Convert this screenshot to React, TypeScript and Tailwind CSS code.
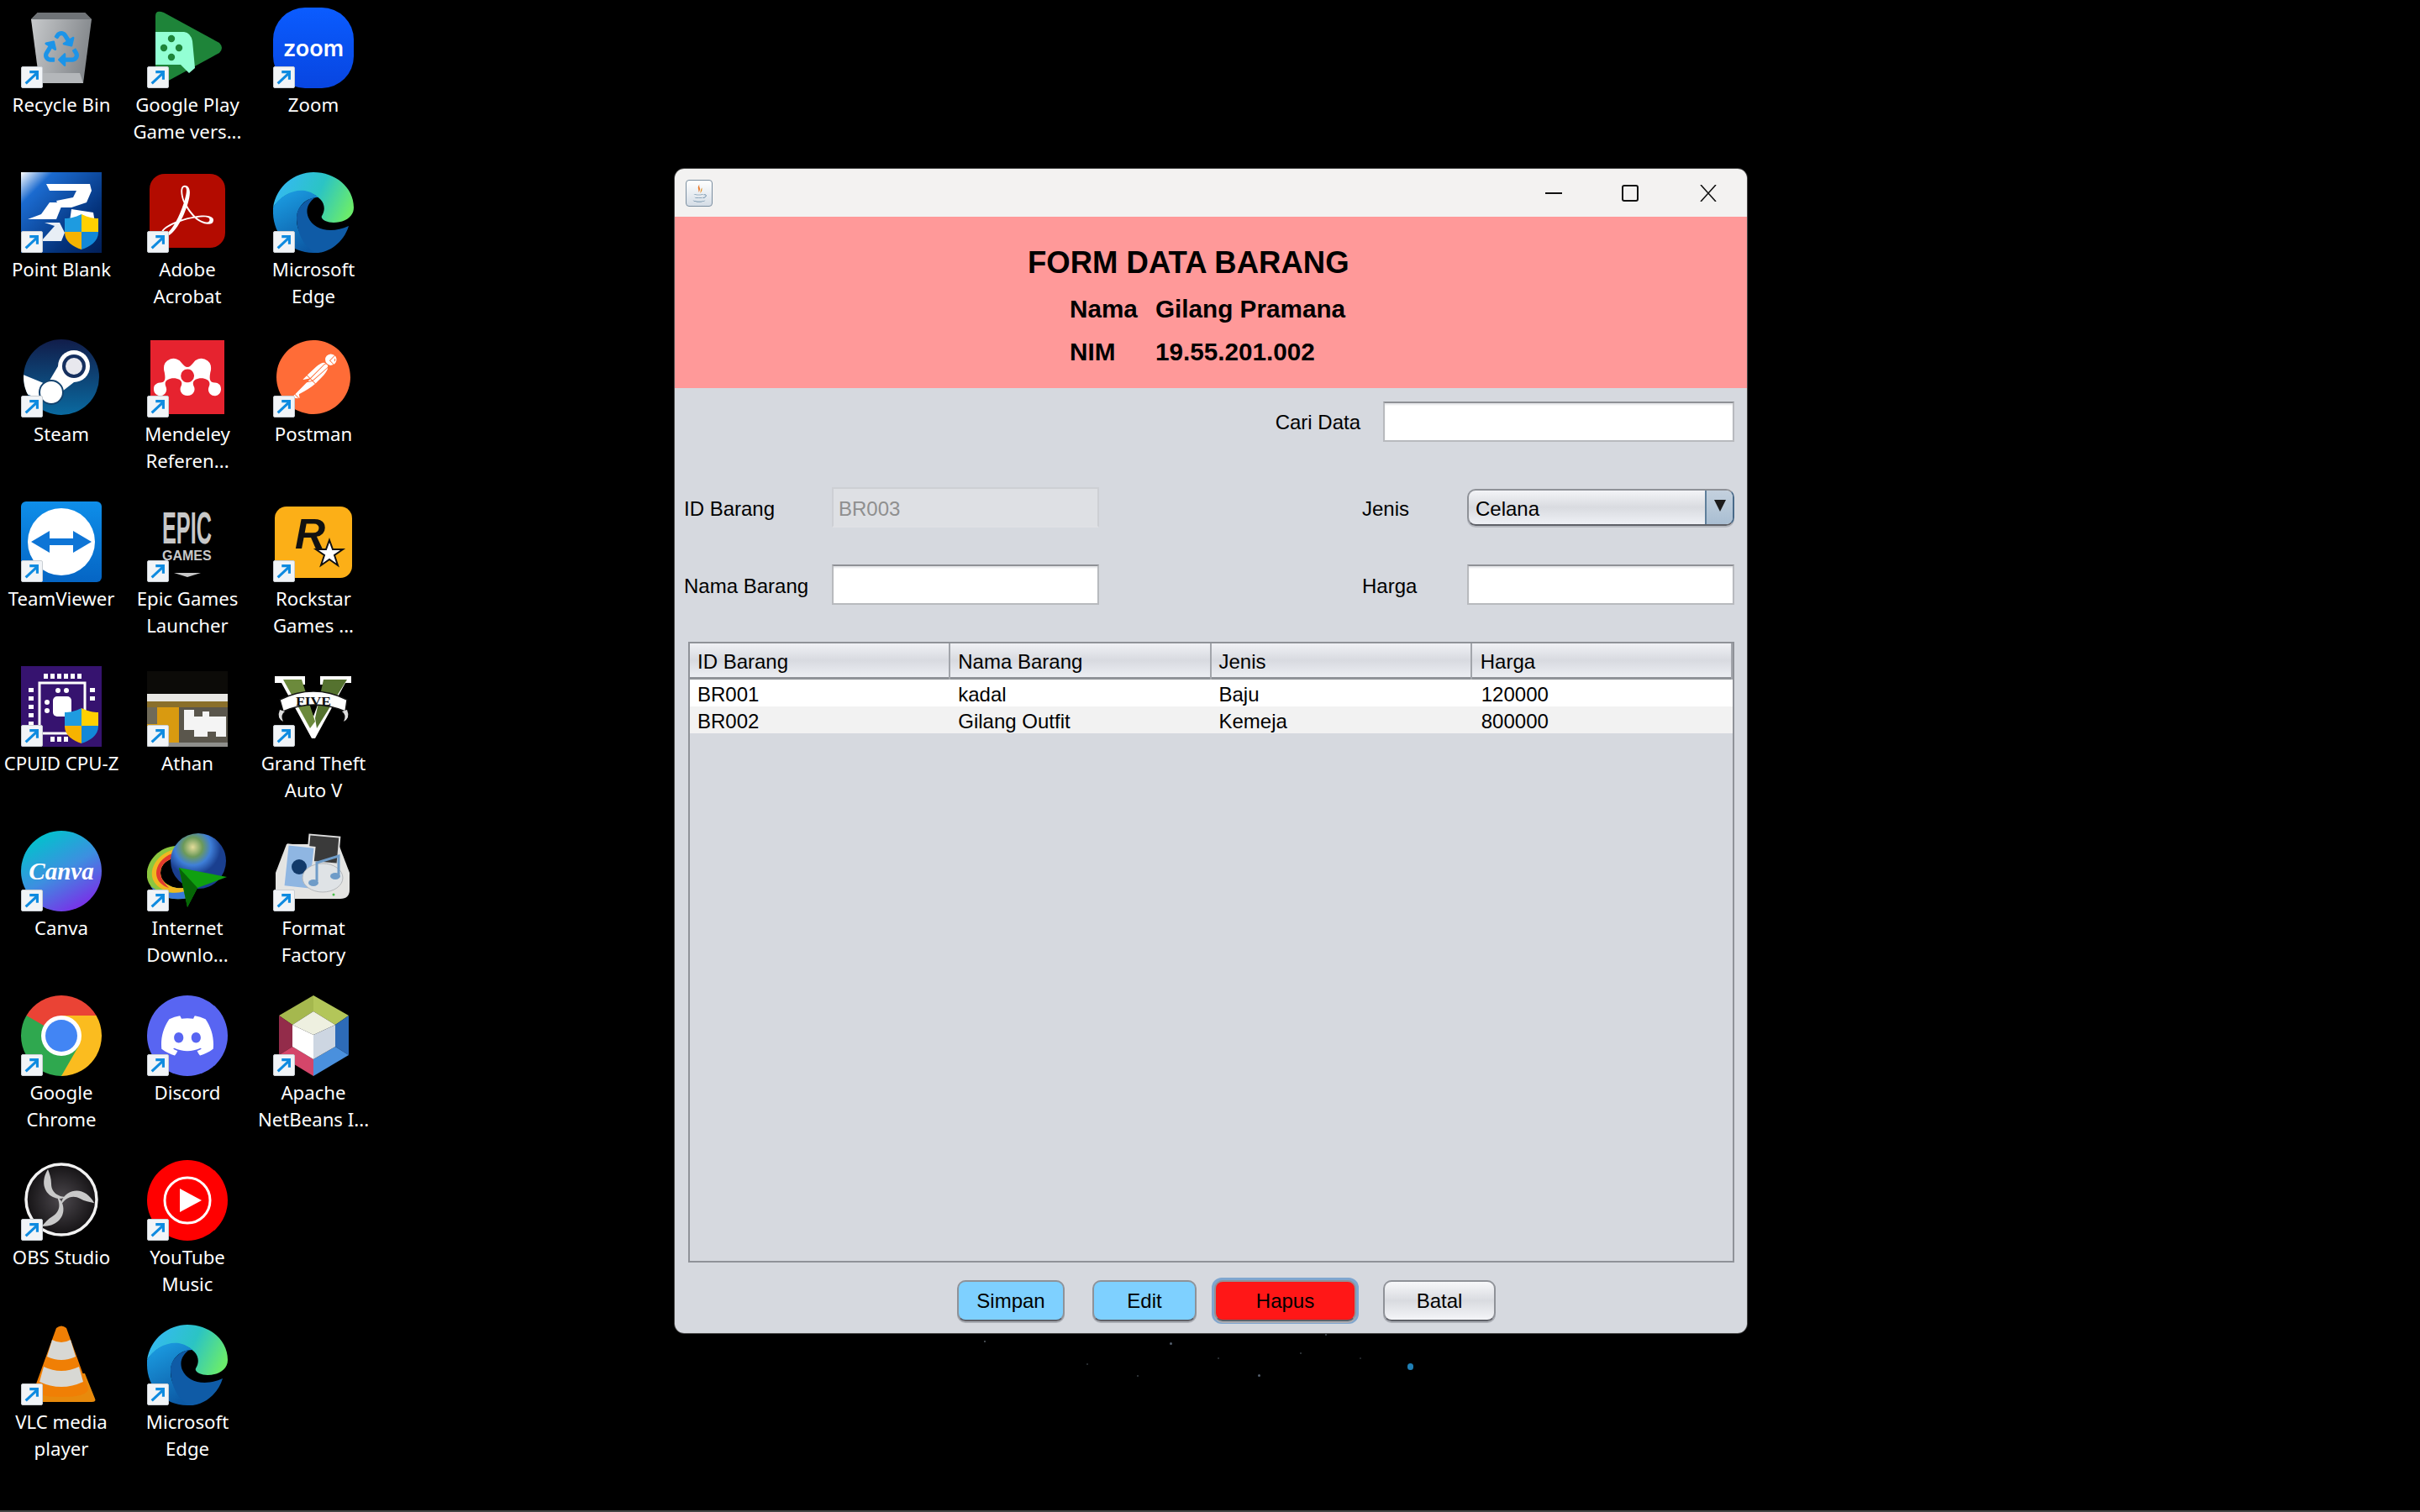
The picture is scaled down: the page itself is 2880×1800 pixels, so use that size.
import type { ReactNode } from "react";
import { FaRecycle } from "react-icons/fa";
import { SiAdobeacrobatreader, SiDiscord, SiMendeley, SiPostman } from "react-icons/si";

function Uac({ id }: { id: string }) {
  const shield = "M72 50C80 54 86 55 92 55V72C92 82 82 89 72 92C62 89 52 82 52 72V55C58 55 64 54 72 50Z";
  return (
    <>
      <clipPath id={id}>
        <path d={shield} />
      </clipPath>
      <g clipPath={`url(#${id})`}>
        <rect x="52" y="50" width="20" height="21" fill="#1e9be0" />
        <rect x="72" y="50" width="20" height="21" fill="#ffd000" />
        <rect x="52" y="71" width="20" height="21" fill="#f6b300" />
        <rect x="72" y="71" width="20" height="21" fill="#1288d8" />
      </g>
    </>
  );
}

function Svg({ children }: { children: ReactNode }) {
  return (
    <svg viewBox="0 0 96 96" className="w-24 h-24 block">
      {children}
    </svg>
  );
}

function Edge() {
  return (
    <Svg>
      <defs>
        <linearGradient id="edgeTop" x1="0" y1="0.3" x2="1" y2="0.6">
          <stop offset="0" stopColor="#35b8f5" />
          <stop offset="0.55" stopColor="#2bc4c4" />
          <stop offset="1" stopColor="#6aeb6c" />
        </linearGradient>
        <linearGradient id="edgeLeft" x1="0.2" y1="0" x2="0.6" y2="1">
          <stop offset="0" stopColor="#1b9de2" />
          <stop offset="1" stopColor="#0c59a4" />
        </linearGradient>
      </defs>
      <path d="M0 42C4 16 26 0 48 0C74 0 96 18 96 42C96 54 84 60 72 60C64 60 56 56 58 52C62 46 62 38 56 32C46 22 30 22 18 26C10 30 4 36 0 42Z" fill="url(#edgeTop)" />
      <path d="M0 42C8 28 24 20 38 22C48 24 54 30 54 30C38 30 28 42 28 56C28 72 40 88 56 96H48C20 96 0 74 0 48Z" fill="url(#edgeLeft)" />
      <path d="M28 54C28 42 38 32 50 30C42 36 38 44 42 54C48 68 68 74 90 64C84 84 66 96 52 96C38 92 28 72 28 54Z" fill="#0f5ba6" />
    </Svg>
  );
}

function Chrome() {
  const sector = "M48 48L89.57 24A48 48 0 0 0 6.43 24L27.2 60Z";
  return (
    <Svg>
      <path d={sector} fill="#ea4335" />
      <path d={sector} fill="#fbbc1f" transform="rotate(120 48 48)" />
      <path d={sector} fill="#2fa84f" transform="rotate(240 48 48)" />
      <circle cx="48" cy="48" r="24" fill="#fff" />
      <circle cx="48" cy="48" r="19" fill="#4285f4" />
    </Svg>
  );
}

function Obs() {
  const blade = "M32 11C24 24 26 38 38 44C44 47 50 46 54 44C46 44 36 40 36 28C36 22 34 16 32 11Z";
  return (
    <Svg>
      <defs>
        <radialGradient id="obsDisc">
          <stop offset="0" stopColor="#4c484d" />
          <stop offset="1" stopColor="#151315" />
        </radialGradient>
      </defs>
      <ellipse cx="48" cy="47" rx="42" ry="42" fill="url(#obsDisc)" stroke="#f2f2f2" strokeWidth="3.5" />
      <g fill="#c9c9c9">
        <path d={blade} />
        <path d={blade} transform="rotate(120 48 47)" />
        <path d={blade} transform="rotate(240 48 47)" />
      </g>
    </Svg>
  );
}

const ICONS: Record<string, ReactNode> = {
  recycle: (
    <div className="relative w-24 h-24">
      <Svg>
        <defs>
          <linearGradient id="bin" x1="0" y1="0" x2="1" y2="0.3">
            <stop offset="0" stopColor="#c9cbcd" />
            <stop offset="1" stopColor="#85898d" />
          </linearGradient>
        </defs>
        <path d="M12 14L20 6H76L84 14L74 90H22Z" fill="url(#bin)" />
        <path d="M12 14L20 6H76L84 14Z" fill="#6f7377" />
        <path d="M22 90L26 78H70L74 90Z" fill="#b4b7ba" />
      </Svg>
      <FaRecycle className="absolute left-[27px] top-[28px] w-[42px] h-[42px] text-[#1c94e8]" />
    </div>
  ),
  play: (
    <Svg>
      <path d="M10 10Q10 2 20 6L86 42Q92 48 86 54L20 90L10 84Z" fill="#1e8439" />
      <path d="M10 29H44Q52 30 54 40L57 72L50 78L40 68H10Z" fill="#93ffd4" />
      <g fill="#1e8439">
        <circle cx="20" cy="48" r="4.2" />
        <circle cx="38" cy="48" r="4.2" />
        <circle cx="29" cy="37" r="4.2" />
        <circle cx="29" cy="59" r="4.2" />
      </g>
    </Svg>
  ),
  zoom: (
    <div className="w-24 h-24 rounded-[38px] bg-gradient-to-b from-[#0b5cff] to-[#0845e0] flex items-center justify-center">
      <span className="font-['Inter',sans-serif] font-semibold text-[27px] text-white leading-none">zoom</span>
    </div>
  ),
  pointblank: (
    <Svg>
      <defs>
        <linearGradient id="pbBg" x1="0" y1="0" x2="1" y2="1">
          <stop offset="0" stopColor="#ffffff" />
          <stop offset="0.2" stopColor="#1b6bd0" />
          <stop offset="0.7" stopColor="#04337c" />
          <stop offset="1" stopColor="#021f58" />
        </linearGradient>
      </defs>
      <rect width="96" height="96" fill="url(#pbBg)" />
      <path d="M30 14H82L84 22L78 36L60 42H46L42 34L62 30L66 22H34Z" fill="#fff" />
      <path d="M34 36H50L42 56H8L24 50Z" fill="#fff" />
      <path d="M28 60H46L52 72L48 82H24L40 64Z" fill="#e8eef5" />
      <path d="M60 44L86 48L88 60L58 58Z" fill="#fff" />
      <Uac id="uacPb" />
    </Svg>
  ),
  adobe: (
    <div className="w-[90px] h-[88px] mt-[2px] ml-[3px] rounded-[18px] bg-[#b30b00] flex items-center justify-center">
      <SiAdobeacrobatreader className="w-[62px] h-[62px] text-white" />
    </div>
  ),
  edge: <Edge />,
  steam: (
    <Svg>
      <defs>
        <linearGradient id="steamBg" x1="0" y1="0" x2="0" y2="1">
          <stop offset="0" stopColor="#111d4a" />
          <stop offset="1" stopColor="#0a6aa0" />
        </linearGradient>
        <clipPath id="steamClip">
          <circle cx="48" cy="48" r="45" />
        </clipPath>
      </defs>
      <circle cx="48" cy="48" r="45" fill="url(#steamBg)" />
      <g clipPath="url(#steamClip)">
        <path d="M50 25L72 47L40 72L28 62Z" fill="#fff" />
        <path d="M0 44L34 58L24 74L6 68Z" fill="#fff" />
        <circle cx="36" cy="66" r="14" fill="#fff" stroke="#13436f" strokeWidth="2" />
      </g>
      <circle cx="63" cy="35" r="19" fill="#fff" />
      <circle cx="63" cy="35" r="14" fill="#16305f" />
      <circle cx="63" cy="35" r="10" fill="#e8e8ee" />
    </Svg>
  ),
  mendeley: (
    <div className="w-[88px] h-[88px] ml-[4px] mt-[4px] bg-[#e6232f] flex items-center justify-center">
      <SiMendeley className="w-[80px] h-[80px] text-white" />
    </div>
  ),
  postman: (
    <div className="relative w-[90px] h-[88px] ml-[3px] mt-[4px]">
      <div className="absolute inset-[2px] rounded-full bg-white" />
      <SiPostman className="absolute inset-0 w-[90px] h-[88px] text-[#ff6c37]" />
    </div>
  ),
  teamviewer: (
    <Svg>
      <defs>
        <linearGradient id="tvBg" x1="0" y1="0" x2="0" y2="1">
          <stop offset="0" stopColor="#0e8ee9" />
          <stop offset="1" stopColor="#0565c4" />
        </linearGradient>
      </defs>
      <rect width="96" height="96" rx="6" fill="url(#tvBg)" />
      <circle cx="48" cy="48" r="40" fill="#fff" />
      <path d="M12 48L34 35V44H62V35L84 48L62 61V52H34V61Z" fill="#0e75d6" />
    </Svg>
  ),
  epic: (
    <Svg>
      <text transform="translate(18 50) scale(0.477 1)" fontFamily="Liberation Sans, sans-serif" fontWeight="700" fontSize="53" fill="#c8c8c8">
        EPIC
      </text>
      <text x="18" y="70" fontFamily="Liberation Sans, sans-serif" fontWeight="700" fontSize="16" fill="#c8c8c8">
        GAMES
      </text>
      <path d="M32 85H64L48 90Z" fill="#c8c8c8" />
    </Svg>
  ),
  rockstar: (
    <Svg>
      <rect x="2" y="6" width="92" height="85" rx="14" fill="#fcaf17" />
      <text x="26" y="56" fontFamily="Liberation Sans, sans-serif" fontWeight="700" fontStyle="italic" fontSize="50" fill="#111">
        R
      </text>
      <path d="M67 46L71 57H83L73 64L77 76L67 69L57 76L61 64L51 57H63Z" fill="#fff" stroke="#111" strokeWidth="2" />
    </Svg>
  ),
  cpuz: (
    <Svg>
      <rect width="96" height="96" fill="#36136f" />
      <rect x="22" y="20" width="54" height="60" fill="none" stroke="#fff" strokeWidth="3" />
      <rect x="38" y="36" width="22" height="24" rx="5" fill="#fff" />
      <g fill="#fff">
        <rect x="27" y="9" width="5" height="6" />
        <rect x="35" y="9" width="5" height="6" />
        <rect x="43" y="9" width="5" height="6" />
        <rect x="51" y="9" width="5" height="6" />
        <rect x="59" y="9" width="5" height="6" />
        <rect x="67" y="9" width="5" height="6" />
        <rect x="9" y="26" width="6" height="5" />
        <rect x="9" y="36" width="6" height="5" />
        <rect x="9" y="46" width="6" height="5" />
        <rect x="9" y="56" width="6" height="5" />
        <rect x="9" y="66" width="6" height="5" />
        <rect x="82" y="26" width="6" height="5" />
        <rect x="82" y="36" width="6" height="5" />
        <rect x="35" y="84" width="5" height="6" />
        <rect x="43" y="84" width="5" height="6" />
        <rect x="51" y="84" width="5" height="6" />
        <circle cx="44" cy="29" r="3" />
        <circle cx="54" cy="29" r="3" />
        <circle cx="31" cy="43" r="3" />
        <circle cx="31" cy="53" r="3" />
      </g>
      <Uac id="uacCpu" />
    </Svg>
  ),
  athan: (
    <Svg>
      <rect y="6" width="96" height="90" fill="#0c0b08" />
      <rect y="33" width="96" height="9" fill="#e8e8e4" />
      <rect y="42" width="96" height="7" fill="#8a6f2a" />
      <rect y="49" width="38" height="42" fill="#d99a10" />
      <rect y="49" width="12" height="20" fill="#6f6a58" />
      <rect x="38" y="49" width="58" height="42" fill="#5a564c" />
      <path d="M44 52H56V60H66V54H74V60H94V84H82V78H72V84H56V76H44Z" fill="#f4f4f4" />
      <rect y="91" width="96" height="5" fill="#8f8f8c" />
    </Svg>
  ),
  gta: (
    <Svg>
      <path d="M2 12H38V22H32L48 60L62 22H56V12H93V20H86L50 86H46L10 20H2Z" fill="#fff" />
      <path d="M12 16H34L50 66L44 74Z" fill="#6c8a3c" />
      <path d="M60 16H88L52 74L50 62Z" fill="#55722f" />
      <path d="M8 40Q48 20 88 40L86 54Q48 38 12 54Z" fill="#fff" stroke="#111" strokeWidth="1.5" />
      <text x="27" y="47" textLength="42" lengthAdjust="spacingAndGlyphs" fontFamily="Liberation Serif, serif" fontWeight="700" fontSize="15" fill="#111">
        FIVE
      </text>
      <path d="M8 52Q4 62 12 66Q8 58 14 54ZM88 52Q92 62 84 66Q88 58 82 54Z" fill="#ddd" />
    </Svg>
  ),
  canva: (
    <div className="w-24 h-24 rounded-full bg-[linear-gradient(150deg,#00c4cc_10%,#3d8fe0_50%,#7d2ae8_90%)] flex items-center justify-center">
      <span className="font-['Liberation_Serif',serif] italic font-bold text-[29px] text-white leading-none">Canva</span>
    </div>
  ),
  idm: (
    <Svg>
      <defs>
        <radialGradient id="globe" cx="0.4" cy="0.25">
          <stop offset="0" stopColor="#e4dc9a" />
          <stop offset="0.35" stopColor="#6c9a5a" />
          <stop offset="0.65" stopColor="#3f7fd8" />
          <stop offset="1" stopColor="#1a3f8f" />
        </radialGradient>
      </defs>
      <path d="M34 18C8 20 -6 46 2 62C10 78 30 84 48 80L44 68C30 70 16 62 16 50C16 40 24 34 34 32Z" fill="#8cc63f" />
      <path d="M34 22C12 26 2 46 7 58C12 70 28 76 46 74L44 68C30 70 16 62 16 50C16 40 24 34 34 32Z" fill="#f0b820" />
      <path d="M34 26C16 30 8 46 12 56C14 62 20 66 26 68C20 62 16 56 16 50C16 40 24 34 34 32Z" fill="#e23b2e" />
      <path d="M4 66C12 78 30 84 48 80L46 72C30 76 14 74 4 66Z" fill="#3a7bd8" />
      <circle cx="61" cy="36" r="33" fill="url(#globe)" />
      <path d="M38 44L95 55L60 68L48 91Z" fill="#10a010" />
      <path d="M38 44L60 68L48 91Z" fill="#066606" />
    </Svg>
  ),
  format: (
    <Svg>
      <path d="M16 16H78L91 50V70Q91 81 80 81H14Q3 81 3 70V50Z" fill="#e4e4e2" />
      <rect x="42" y="6" width="36" height="32" fill="#3a3a3a" stroke="#ddd" strokeWidth="2" transform="rotate(5 60 22)" />
      <rect x="15" y="18" width="32" height="50" fill="#8fb6e2" stroke="#e5e5e5" strokeWidth="2" transform="rotate(6 31 43)" />
      <circle cx="31" cy="43" r="9" fill="#123a6a" />
      <ellipse cx="59" cy="56" rx="24" ry="17" fill="#dfe3e6" stroke="#b5b8bb" />
      <path d="M52 60V38L78 30V52" fill="none" stroke="#6f9cc8" strokeWidth="3" />
      <ellipse cx="48" cy="62" rx="6" ry="4" fill="#6f9cc8" />
      <ellipse cx="74" cy="54" rx="6" ry="4" fill="#6f9cc8" />
      <circle cx="72" cy="76" r="1.5" fill="#4bc04b" />
    </Svg>
  ),
  chrome: <Chrome />,
  discord: (
    <div className="w-24 h-24 rounded-full bg-[#5865f2] flex items-center justify-center">
      <SiDiscord className="w-[62px] h-[62px] text-white" />
    </div>
  ),
  netbeans: (
    <Svg>
      <path d="M48 0L90 24L74 35L48 19Z" fill="#b3c659" />
      <path d="M48 0L7 24L23 35L48 19Z" fill="#a5b84e" />
      <path d="M7 24V71L23 61V35Z" fill="#932c4a" />
      <path d="M90 24V71L74 61V35Z" fill="#2d6bb8" />
      <path d="M7 71L48 96V76L23 61Z" fill="#d4466a" />
      <path d="M90 71L48 96V76L74 61Z" fill="#4a90dd" />
      <path d="M48 19L74 35L48 47L23 35Z" fill="#eef0e0" />
      <path d="M23 35L48 47V76L23 61Z" fill="#fff" />
      <path d="M74 35L48 47V76L74 61Z" fill="#cdd6e2" />
    </Svg>
  ),
  obs: <Obs />,
  ytmusic: (
    <Svg>
      <circle cx="48" cy="48" r="48" fill="#ff0000" />
      <circle cx="48" cy="48" r="27" fill="none" stroke="#fff" strokeWidth="3" />
      <path d="M39 34L65 48L39 62Z" fill="#fff" />
    </Svg>
  ),
  vlc: (
    <Svg>
      <path d="M24 58L12 88Q12 92 18 92H84Q90 92 88 88L76 58Z" fill="#e88a0c" />
      <path d="M42 4Q48 -1 54 4L80 76Q80 86 48 86Q16 86 16 76Z" fill="#f07f05" />
      <path d="M37 18Q48 24 59 18L65 38Q48 46 31 38Z" fill="#d8d8d4" />
      <path d="M27 50Q48 60 69 50L74 68Q48 80 22 68Z" fill="#d8d8d4" />
    </Svg>
  ),
};

const APPS: { icon: string; label: string[] }[] = [
  { icon: "recycle", label: ["Recycle Bin"] },
  { icon: "play", label: ["Google Play", "Game vers..."] },
  { icon: "zoom", label: ["Zoom"] },
  { icon: "pointblank", label: ["Point Blank"] },
  { icon: "adobe", label: ["Adobe", "Acrobat"] },
  { icon: "edge", label: ["Microsoft", "Edge"] },
  { icon: "steam", label: ["Steam"] },
  { icon: "mendeley", label: ["Mendeley", "Referen..."] },
  { icon: "postman", label: ["Postman"] },
  { icon: "teamviewer", label: ["TeamViewer"] },
  { icon: "epic", label: ["Epic Games", "Launcher"] },
  { icon: "rockstar", label: ["Rockstar", "Games ..."] },
  { icon: "cpuz", label: ["CPUID CPU-Z"] },
  { icon: "athan", label: ["Athan"] },
  { icon: "gta", label: ["Grand Theft", "Auto V"] },
  { icon: "canva", label: ["Canva"] },
  { icon: "idm", label: ["Internet", "Downlo..."] },
  { icon: "format", label: ["Format", "Factory"] },
  { icon: "chrome", label: ["Google", "Chrome"] },
  { icon: "discord", label: ["Discord"] },
  { icon: "netbeans", label: ["Apache", "NetBeans I..."] },
  { icon: "obs", label: ["OBS Studio"] },
  { icon: "ytmusic", label: ["YouTube", "Music"] },
  { icon: "", label: [] },
  { icon: "vlc", label: ["VLC media", "player"] },
  { icon: "edge", label: ["Microsoft", "Edge"] },
];

const STARS = [
  "left-[1171px] top-[1596px] w-[2px] h-[2px] bg-[#5a6068]",
  "left-[1392px] top-[1598px] w-[3px] h-[3px] bg-[#55606e]",
  "left-[1293px] top-[1623px] w-[2px] h-[2px] bg-[#33383e]",
  "left-[1353px] top-[1637px] w-[2px] h-[2px] bg-[#3a4046]",
  "left-[1449px] top-[1616px] w-[2px] h-[2px] bg-[#33383e]",
  "left-[1497px] top-[1636px] w-[3px] h-[3px] bg-[#55606e]",
  "left-[1547px] top-[1610px] w-[2px] h-[2px] bg-[#3a4046]",
  "left-[1577px] top-[1588px] w-[2px] h-[2px] bg-[#4a5058]",
  "left-[1618px] top-[1616px] w-[2px] h-[2px] bg-[#2a2e33]",
  "left-[1675px] top-[1623px] w-[7px] h-[8px] bg-[#1f7fb5]",
];

function DesktopIcon({ icon, label }: { icon: string; label: string[] }) {
  if (!icon) return <div />;
  return (
    <div className="flex flex-col items-center">
      <div className="relative w-24 h-24">
        {ICONS[icon]}
        <div className="absolute left-0 bottom-0 w-[26px] h-[26px] rounded-[2px] bg-[#f1f4f7] border border-[#c9ced3] flex items-center justify-center">
          <svg viewBox="0 0 24 24" className="w-[22px] h-[22px]">
            <path d="M4 20L18 7M9 5H19V15" fill="none" stroke="#0f8be0" strokeWidth="3.4" />
          </svg>
        </div>
      </div>
      <div className="mt-[4px] text-center text-white text-[22.2px] leading-[32px] whitespace-nowrap font-['Noto_Sans',sans-serif]">
        {label.map((line) => (
          <div key={line}>{line}</div>
        ))}
      </div>
    </div>
  );
}

function JavaIcon() {
  return (
    <div className="w-8 h-8 ml-[13px] rounded-[4px] border border-[#7a8ea0] bg-gradient-to-b from-[#ffffff] to-[#d5dde6]">
      <svg viewBox="0 0 32 32" className="w-full h-full">
        <path d="M17 4C14 8 20 10 15 15C17 11 12 10 17 4Z" fill="#e8782a" />
        <path d="M20 9C17 11 19 13 17 16C21 13 19 11 20 9Z" fill="#e8962a" />
        <path d="M9 17C12 18 19 18 22 17C21 19 10 19 9 17Z" fill="#5a7f9c" />
        <path d="M10 21C13 22 18 22 21 21C20 23 11 23 10 21Z" fill="#5a7f9c" />
        <path d="M22 18C26 17 26 21 21 22" fill="none" stroke="#5a7f9c" strokeWidth="1" />
        <path d="M8 25C13 27 20 27 24 25C21 28 11 28 8 25Z" fill="#5a7f9c" />
      </svg>
    </div>
  );
}

function Field({ className, disabled, value }: { className: string; disabled?: boolean; value?: string }) {
  if (disabled) {
    return (
      <div className={`${className} h-12 bg-[#dee0e4] border-2 border-[#cdcfd4] border-b-[#dfe1e5] pl-[6px] pt-[3px] flex items-center text-[#8f8f8f]`}>
        {value}
      </div>
    );
  }
  return <div className={`${className} h-12 bg-white border-2 border-[#b8babe] border-t-[#8f9196] shadow-[inset_0_2px_2px_#e4e5e8]`} />;
}

function Button({ label, className }: { label: string; className: string }) {
  return (
    <button className={`h-[49px] rounded-[10px] border-2 border-[#8f9298] border-b-[#5f6168] shadow-[0_2px_0_#a9acb3] text-black flex items-center justify-center ${className}`}>
      {label}
    </button>
  );
}

const COLUMNS = ["ID Barang", "Nama Barang", "Jenis", "Harga"];
const ROWS = [
  ["BR001", "kadal", "Baju", "120000"],
  ["BR002", "Gilang Outfit", "Kemeja", "800000"],
];

export default function App() {
  return (
    <div className="relative w-[2880px] h-[1800px] bg-black overflow-hidden">
      <div className="grid grid-cols-[150px_150px_150px] auto-rows-[196px] w-[450px] -ml-[2px] pt-[9px]">
        {APPS.map((a, i) => (
          <DesktopIcon key={i} icon={a.icon} label={a.label} />
        ))}
      </div>

      {STARS.map((s) => (
        <div key={s} className={`absolute rounded-full ${s}`} />
      ))}

      {/* form window */}
      <div className="absolute left-[802px] top-[200px] w-[1278px] h-[1388px] rounded-[12px] border border-[#484848] overflow-hidden flex flex-col text-[24px] text-black font-['Liberation_Sans',Arial,sans-serif]">
        <div className="h-[57px] bg-[#f3f2f1] flex items-center">
          <JavaIcon />
          <div className="ml-auto mr-[36px] flex items-center">
            <svg viewBox="0 0 20 20" className="w-5 h-5">
              <path d="M0 10H20" stroke="#111" strokeWidth="2" />
            </svg>
            <svg viewBox="0 0 20 20" className="w-5 h-5 ml-[71px]">
              <rect x="1" y="1" width="18" height="18" rx="2" fill="none" stroke="#111" strokeWidth="2" />
            </svg>
            <svg viewBox="0 0 20 20" className="w-5 h-5 ml-[73px]">
              <path d="M1 0L19 20M19 0L1 20" stroke="#111" strokeWidth="1.6" />
            </svg>
          </div>
        </div>

        <div className="h-[204px] bg-[#ff9999] pl-[420px] pt-[33px] font-bold">
          <div className="text-[36.5px] leading-[44px]">FORM DATA BARANG</div>
          <div className="mt-[15px] ml-[50px] grid grid-cols-[102px_1fr] gap-y-[15px] text-[29.7px] leading-[36px]">
            <div>Nama</div>
            <div>Gilang Pramana</div>
            <div>NIM</div>
            <div>19.55.201.002</div>
          </div>
        </div>

        <div className="flex-1 bg-[#d6d9df] flex flex-col">
          <div className="mt-4 pr-[15px] flex justify-end items-center">
            <span className="mr-[27px] mt-[2px]">Cari Data</span>
            <Field className="w-[418px]" />
          </div>

          <div className="mt-[54px] pl-[11px] flex items-center">
            <span className="w-[176px] pt-[3px]">ID Barang</span>
            <Field className="w-[318px]" disabled value="BR003" />
            <span className="ml-[313px] w-[125px] pt-[3px]">Jenis</span>
            <div className="w-[318px] h-[44px] rounded-[10px] border-2 border-[#8f9298] border-b-[#5f6168] border-r-[#496a89] shadow-[0_2px_0_#b5b8bf] flex overflow-hidden bg-gradient-to-b from-[#f3f4f7] via-[#d9dbe0] to-[#eef0f5]">
              <span className="flex-1 pl-[8px] leading-[43px]">Celana</span>
              <div className="w-[33px] border-l-2 border-[#5f7f9b] bg-gradient-to-b from-[#c4d1de] to-[#a9bed2] flex justify-center pt-[11px]">
                <svg viewBox="0 0 14 14" className="w-[14px] h-[14px]">
                  <path d="M0 0H14L7 14Z" fill="#1c1c1c" />
                </svg>
              </div>
            </div>
          </div>

          <div className="mt-[44px] pl-[11px] flex items-center">
            <span className="w-[176px] pt-[3px]">Nama Barang</span>
            <Field className="w-[318px]" />
            <span className="ml-[313px] w-[125px] pt-[3px]">Harga</span>
            <Field className="w-[318px]" />
          </div>

          <div className="mt-[44px] ml-[16px] mr-[15px] h-[739px] border-2 border-[#8f9298]">
            <div className="grid grid-cols-4 h-[43px] border-b-[3px] border-[#8f9298] bg-gradient-to-b from-[#f0f1f5] via-[#d8dae0] to-[#eceef3]">
              {COLUMNS.map((c, i) => (
                <div key={c} className={`leading-[43px] border-r-2 border-[#a2a5ab] ${i === 3 ? "pl-[10px]" : "pl-[9px]"}`}>
                  {c}
                </div>
              ))}
            </div>
            {ROWS.map((row, i) => (
              <div key={row[0]} className={`grid grid-cols-4 h-8 leading-[35px] ${i % 2 === 0 ? "bg-white" : "bg-[#f2f2f2]"}`}>
                {row.map((cell, j) => (
                  <div key={cell} className={j === 3 ? "pl-[11px]" : "pl-[9px]"}>
                    {cell}
                  </div>
                ))}
              </div>
            ))}
          </div>

          <div className="mt-[21px] flex items-start">
            <Button label="Simpan" className="ml-[336px] w-[128px] bg-[#7ed0ff]" />
            <Button label="Edit" className="ml-[33px] w-[124px] bg-[#7ed0ff]" />
            <div className="ml-[18px] -mt-[3px] w-[175px] h-[55px] p-[3px] rounded-[12px] bg-[#7fa6cf]">
              <Button label="Hapus" className="w-full bg-[#ff1717]" />
            </div>
            <Button label="Batal" className="ml-[29px] w-[134px] bg-gradient-to-b from-[#f7f8fa] via-[#d9dbe0] to-[#f4f5f8]" />
          </div>
        </div>
      </div>

      <div className="absolute left-0 right-0 bottom-0 h-[2px] bg-[#444]" />
    </div>
  );
}
